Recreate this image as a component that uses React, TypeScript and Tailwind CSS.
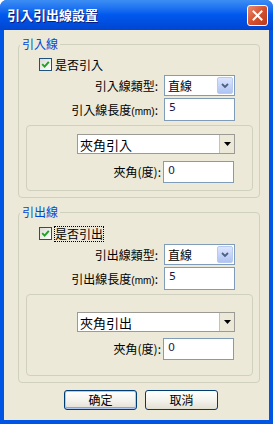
import React from 'react'

const XPCombo = ({ value }: { value: string }) => (
    <div className="flex h-[21px] w-[71px] items-center border border-[#7F9DB9] bg-white pl-[3px]">
        <span className="flex-1 text-[12px] leading-none text-black">{value}</span>
        <span className="mr-px flex h-[17px] w-[16px] items-center justify-center rounded-[2px] border border-[#B9CAF1] bg-linear-to-b from-[#DCE6FD] to-[#AFC3F3]">
            <svg width="8" height="6" viewBox="0 0 8 6">
                <path d="M1 1 L4 4 L7 1" stroke="#4D6185" strokeWidth="1.8" fill="none" />
            </svg>
        </span>
    </div>
)

const ClassicSelect = ({ value }: { value: string }) => (
    <div className="flex h-[20px] w-[158px] items-stretch border border-[#9C9A94] bg-white">
        <span className="flex flex-1 items-center pl-[2px] text-[13px] leading-none text-black">
            {value}
        </span>
        <span className="flex w-[15px] items-center justify-center border-l border-[#C6C3B6] bg-[#ECE9D8]">
            <svg width="7" height="4" viewBox="0 0 7 4">
                <path d="M0 0 H7 L3.5 4 Z" fill="#000" />
            </svg>
        </span>
    </div>
)

const TextBox = ({ value, h = 'h-[23px]' }: { value: string; h?: string }) => (
    <div className={`w-[71px] ${h} border border-[#7F9DB9] bg-white pl-[4px] pt-[2px] font-['DejaVu_Sans',sans-serif] text-[11px] leading-[13px] text-[#1a1a4a]`}>
        {value}
    </div>
)

const Check = () => (
    <span className="flex h-[13px] w-[13px] items-center justify-center border border-[#1C5180] bg-linear-to-br from-[#DCDCD5] to-white">
        <svg width="9" height="9" viewBox="0 0 9 9">
            <path d="M1.2 4.2 L3.6 6.6 L7.8 1.8" stroke="#21A121" strokeWidth="1.9" fill="none" />
        </svg>
    </span>
)

type GroupProps = {
    title: string
    check: string
    focus?: boolean
    line: string
    mode: string
    gap: string
    innerTop: string
    innerRow: string
    innerBottom: string
    innerMt: string
}

const Group = ({ title, check, focus, line, mode, gap, innerTop, innerRow, innerBottom, innerMt }: GroupProps) => (
    <fieldset className="w-[242px] rounded-[4px] border border-[#D0D0BF] pb-[6px]">
        <legend className="ml-px px-[2px] text-[12px] leading-[16px] text-[#0046D5]">{title}</legend>
        <div className={`flex h-[15px] items-center gap-[3px] pl-[20px] ${gap}`}>
            <Check />
            <span className={`text-[12px] leading-[14px] text-black ${focus ? 'outline-1 outline-dotted outline-black' : ''}`}>
                {check}
            </span>
        </div>
        <div className="mt-[3px] flex items-center">
            <span className="w-[139px] text-right text-[12px] text-black">{line}線類型:</span>
            <span className="ml-[6px]">
                <XPCombo value="直線" />
            </span>
        </div>
        <div className="mt-[2px] flex items-center">
            <span className="w-[139px] text-right text-[12px] text-black">
                {line}線長度<span className="font-['Liberation_Sans',sans-serif] text-[10px]">(mm)</span>:
            </span>
            <span className="ml-[6px]">
                <TextBox value="5" />
            </span>
        </div>
        <div className={`ml-[7px] w-[227px] rounded-[4px] border border-[#D0D0BF] ${innerMt} ${innerTop} ${innerBottom}`}>
            <div className="ml-[50px]">
                <ClassicSelect value={mode} />
            </div>
            <div className={`flex items-center ${innerRow}`}>
                <span className="w-[134px] text-right text-[12px] text-black">夾角(度):</span>
                <span className="ml-[2px]">
                    <TextBox value="0" h="h-[22px]" />
                </span>
            </div>
        </div>
    </fieldset>
)

const XPButton = ({ label, primary }: { label: string; primary?: boolean }) => (
    <button
        className={`h-[20px] w-[73px] rounded-[3px] border border-[#003C74] bg-linear-to-b from-white via-[#F4F3EE] to-[#E3E0D2] text-[12px] leading-none text-black ${
            primary ? 'shadow-[inset_0_0_0_1px_#AFC8F5,inset_0_-1px_0_1px_#86A5E6]' : ''
        }`}
    >
        {label}
    </button>
)

export default function App() {
    return (
        <div className="h-[424px] w-[273px] overflow-hidden rounded-t-[7px] bg-[#0055E5] font-['Noto_Sans_CJK_TC','Noto_Sans_CJK_JP',sans-serif]">
            <div className="flex h-[30px] items-center bg-linear-to-b from-[#3C8EF3] via-[#0058EE] to-[#0045D0] pl-[7px] pr-[5px]">
                <span className="flex-1 text-[13px] font-bold text-white [text-shadow:1px_1px_0_#0A1E80]">
                    引入引出線設置
                </span>
                <span className="flex h-[21px] w-[21px] items-center justify-center rounded-[3px] border border-white bg-linear-to-br from-[#E98B6E] via-[#D5512F] to-[#B83A1C]">
                    <svg width="11" height="11" viewBox="0 0 11 11">
                        <path d="M1.5 1.5 L9.5 9.5 M9.5 1.5 L1.5 9.5" stroke="#fff" strokeWidth="2" strokeLinecap="square" />
                    </svg>
                </span>
            </div>
            <div className="mx-[4px] flex h-[390px] flex-col bg-[#ECE9D8] pl-[14px] pt-[6px]">
                <Group
                    title="引入線"
                    check="是否引入"
                    line="引入"
                    mode="夾角引入"
                    gap="mt-[5px]"
                    innerMt="mt-[4px]"
                    innerTop="pt-[8px]"
                    innerRow="mt-[7px]"
                    innerBottom="pb-[7px]"
                />
                <div className="mt-[6px]">
                    <Group
                        title="引出線"
                        check="是否引出"
                        focus
                        line="引出"
                        mode="夾角引出"
                        gap="mt-[6px]"
                        innerMt="mt-[4px]"
                        innerTop="pt-[17px]"
                        innerRow="mt-[6px]"
                        innerBottom="pb-[15px]"
                    />
                </div>
                <div className="mt-[7px] flex gap-[8px] pl-[46px]">
                    <XPButton label="确定" primary />
                    <XPButton label="取消" />
                </div>
            </div>
        </div>
    )
}
